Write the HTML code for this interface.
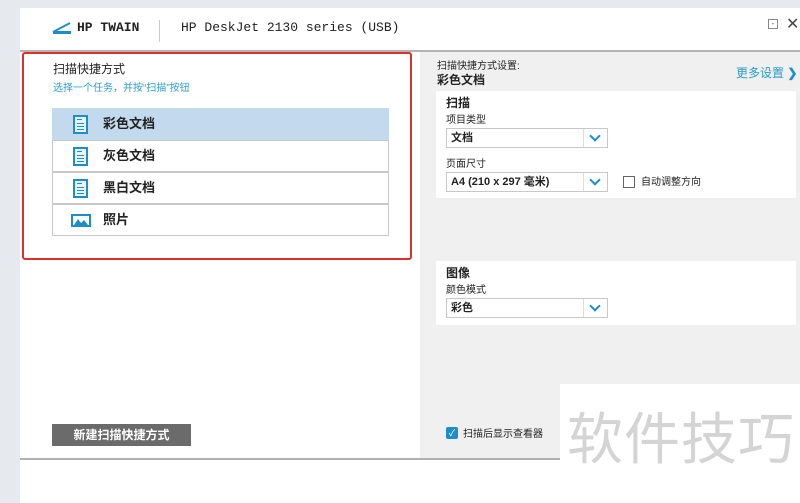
<!DOCTYPE html>
<html><head><meta charset="utf-8"><style>
*{margin:0;padding:0;box-sizing:border-box}
body{width:800px;height:503px;overflow:hidden;background:#e6eaee;position:relative;font-family:"Liberation Sans","Noto Sans CJK SC",sans-serif;font-size:12px;color:#222}
.a{position:absolute}
.mono{font-family:"Liberation Mono","Noto Sans CJK SC",monospace}
.row{position:absolute;left:52px;width:337px;height:32px;border:1px solid #c8c8c8;background:#fff;font-weight:bold;font-size:13px;line-height:30px;padding-left:50px}
.doc{position:absolute;left:20px;top:6px;width:15px;height:19px;border:2px solid #1e8fc6;background:#e8f4fb}
.doc:before{content:"";position:absolute;left:2px;right:2px;top:6px;height:9px;background:repeating-linear-gradient(#1e8fc6 0 1px,transparent 1px 3px)}
.doc:after{content:"";position:absolute;left:2px;width:5px;top:2px;height:1px;background:#1e8fc6}
.sel{position:absolute;width:162px;height:20px;border:1px solid #c8c8c8;background:#fff;font-size:11px;font-weight:bold;line-height:18px;padding-left:4px}
.sel i{position:absolute;right:0;top:0;width:24px;height:18px;border-left:1px solid #ddd}
.sel i:after{content:"";position:absolute;left:7px;top:3px;width:6px;height:6px;border-right:2px solid #1e8fc6;border-bottom:2px solid #1e8fc6;transform:rotate(45deg)}
</style></head><body>
<div class="a" style="left:20px;top:8px;width:780px;height:495px;background:#fff"></div>
<div class="a" style="left:420px;top:52px;width:380px;height:406px;background:#f0f0f0"></div>
<div class="a" style="left:20px;top:50px;width:780px;height:2px;background:#b4b4b4"></div>
<div class="a" style="left:20px;top:458px;width:780px;height:2px;background:#b0b0b0"></div>
<svg class="a" style="left:52px;top:21px" width="20" height="14"><path d="M1 11 L18 2" stroke="#1e8fc6" stroke-width="2"/><rect x="1" y="10" width="18" height="3" fill="#1e8fc6"/></svg>
<div class="a mono" style="left:77px;top:20px;font-weight:bold;font-size:13px">HP TWAIN</div>
<div class="a" style="left:159px;top:20px;width:1px;height:22px;background:#ccc"></div>
<div class="a mono" style="left:181px;top:20px;font-size:13px">HP DeskJet 2130 series (USB)</div>
<div class="a" style="left:768px;top:19px;width:10px;height:10px;border:1px solid #888;font-size:8px;line-height:7px;text-align:center;color:#555">-</div>
<div class="a" style="left:786px;top:14px;font-size:16px;color:#444">✕</div>
<div class="a" style="left:22px;top:52px;width:390px;height:208px;border:2px solid #d9322c;border-radius:3px"></div>
<div class="a" style="left:53px;top:60px;font-size:12px">扫描快捷方式</div>
<div class="a" style="left:53px;top:79px;font-size:10px;color:#2a9dd0">选择一个任务，并按“扫描”按钮</div>
<div class="row" style="top:108px;background:#c3d9ee;border-color:#c3d9ee"><span class="doc"></span>彩色文档</div>
<div class="row" style="top:140px"><span class="doc"></span>灰色文档</div>
<div class="row" style="top:172px"><span class="doc"></span>黑白文档</div>
<div class="row" style="top:204px"><svg style="position:absolute;left:18px;top:9px" width="20" height="13"><rect x="1" y="1" width="18" height="11" fill="#fff" stroke="#1e8fc6" stroke-width="2"/><path d="M3 11 L7 5 L10 9 L13 6 L17 11Z" fill="#1e8fc6"/></svg>照片</div>
<div class="a" style="left:52px;top:424px;width:139px;height:22px;background:#6b6b6b;color:#fff;font-weight:bold;font-size:12px;text-align:center;line-height:22px">新建扫描快捷方式</div>
<div class="a" style="left:437px;top:57px;font-size:10px">扫描快捷方式设置:</div>
<div class="a" style="left:437px;top:71px;font-size:12px;font-weight:bold">彩色文档</div>
<div class="a" style="left:736px;top:64px;font-size:12px;color:#2a9dd0">更多设置 <b style="color:#1e8fc6">❯</b></div>
<div class="a" style="left:436px;top:91px;width:360px;height:107px;background:#fff"></div>
<div class="a" style="left:446px;top:94px;font-size:12px;font-weight:bold">扫描</div>
<div class="a" style="left:446px;top:111px;font-size:10px">项目类型</div>
<div class="sel" style="left:446px;top:128px">文档<i></i></div>
<div class="a" style="left:446px;top:155px;font-size:10px">页面尺寸</div>
<div class="sel" style="left:446px;top:172px">A4 (210 x 297 毫米)<i></i></div>
<div class="a" style="left:623px;top:176px;width:12px;height:12px;border:1px solid #666"></div>
<div class="a" style="left:641px;top:173px;font-size:10px">自动调整方向</div>
<div class="a" style="left:436px;top:261px;width:360px;height:64px;background:#fff"></div>
<div class="a" style="left:446px;top:264px;font-size:12px;font-weight:bold">图像</div>
<div class="a" style="left:446px;top:281px;font-size:10px">颜色模式</div>
<div class="sel" style="left:446px;top:298px">彩色<i></i></div>
<div class="a" style="left:446px;top:427px;width:12px;height:12px;background:#1e8fc6;border-radius:2px;color:#fff;font-size:9px;line-height:12px;text-align:center">✓</div>
<div class="a" style="left:463px;top:425px;font-size:10px">扫描后显示查看器</div>
<div class="a" style="left:560px;top:384px;width:240px;height:119px;background:#fff"></div>
<div class="a" style="left:567px;top:405px;font-size:56px;color:#d4d4d4;letter-spacing:1px;line-height:70px">软件技巧</div>
</body></html>
